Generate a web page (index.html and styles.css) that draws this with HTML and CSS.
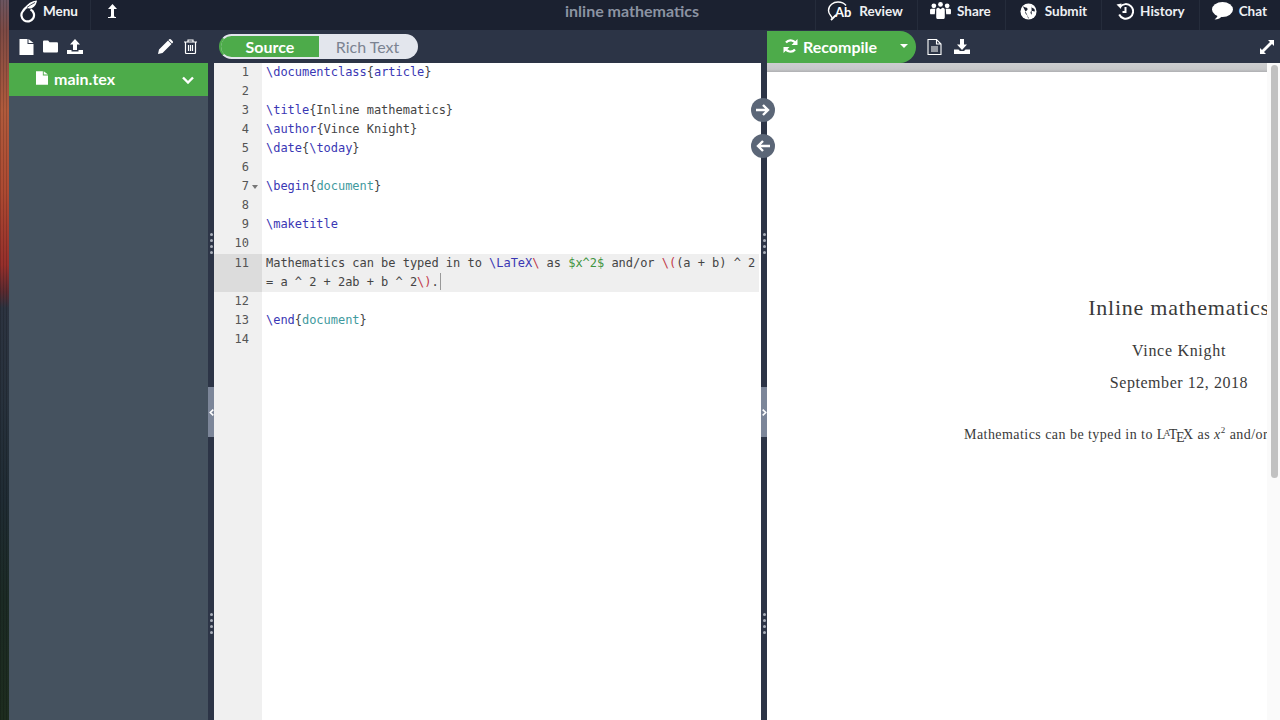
FILE: index.html
```html
<!DOCTYPE html>
<html>
<head>
<meta charset="utf-8">
<title>inline mathematics</title>
<link rel="stylesheet" href="styles.css">
</head>
<body>
<div class="wallpaper"></div>
<div class="app">

  <div class="topbar">
    <div class="top-left">
      <a class="menu">
        <svg class="logo" width="24" height="24" viewBox="0 0 24 24"><path d="M14.500 10.500a6.300 6.300 0 1 1-7.600 1.600C9.500 8 13 5.500 19.500 3" fill="none" stroke="#fff" stroke-width="2.200"/><path d="M9 9.500C11 4.500 16 2 21 1.500c-.5 4-3 7.500-6.500 8-2 .2-3.500-.5-5.500 0z" fill="#fff"/><path d="M11 8.500c2.500-2 5-3.500 8-5" fill="none" stroke="#1b2130" stroke-width=".8"/></svg>
        Menu
      </a>
      <a class="sync">
        <svg width="10" height="14" viewBox="0 0 10 14"><path d="M5.500 0 10 5H7v6c0 1.500.5 2 1.500 2H9v1H1v-1h1.500C3.500 13 4 12.500 4 11V5H1z" fill="#fff"/></svg>
      </a>
    </div>
    <div class="doc-title">inline mathematics</div>
    <div class="top-right">
      <a class="top-item item-review">
        <svg width="28" height="20" viewBox="0 0 28 20"><path d="M5 17c0-2-3.500-3-3.500-7.500C1.500 4 6.500 1 11 1c3.500 0 6.500 1.500 8 3.500" fill="none" stroke="#fff" stroke-width="1.400"/><path d="M4 19l5-5" stroke="#fff" stroke-width="1.800"/><text x="8" y="16" class="ab">Ab</text></svg>
        Review
      </a>
      <a class="top-item">
        <svg width="21" height="19" viewBox="0 0 22 20" fill="#fff"><circle cx="11" cy="2.500" r="2.500"/><circle cx="4" cy="4" r="2.500"/><circle cx="18" cy="4" r="2.500"/><path d="M0 8.500C0 7 1 7 2.500 7h3L5 13H1c-1 0-1-1-1-2zM22 8.500C22 7 21 7 19.500 7h-3l.5 6h4c1 0 1-1 1-2z"/><path d="M6.500 8C6.500 6.500 8 6 9 6l2 1.500L13 6c1 0 2.500.5 2.500 2v8c0 1.500-1 2-2 2h-5c-1 0-2-.5-2-2z"/></svg>
        Share
      </a>
      <a class="top-item item-wide">
        <svg width="17" height="17" viewBox="0 0 18 18"><circle cx="9" cy="9" r="8.500" fill="#fff"/><path d="M3 3.500C5 5 7.500 4.500 8 6c.5 2-2.500 2-2.500 4S8 12 8 14c0 1.500 1 2.500 1.500 2.500M12 2c-.5 2 .5 3 2 3.500s2 2 1.500 3.500c-1 0-2-1-3.500-.5-1.500.6-1 3 .5 4" fill="#1b2130"/></svg>
        Submit
      </a>
      <a class="top-item item-wide item-history">
        <svg width="18" height="18" viewBox="0 0 18 18" fill="none" stroke="#fff" stroke-width="2"><path d="M4 5a7.300 7.300 0 1 1-.8 7.500"/><path d="M9.500 5v5H6.500"/><path d="M0.500 2.500 5.500 1.500 5 7z" fill="#fff" stroke="none"/></svg>
        History
      </a>
      <a class="top-item">
        <svg width="21" height="18" viewBox="0 0 21 18"><ellipse cx="10.500" cy="7.500" rx="10.500" ry="7.500" fill="#fff"/><path d="M6 12c0 2-1.500 4-3.500 5.500C6 17.500 9 16 11 13z" fill="#fff"/></svg>
        Chat
      </a>
    </div>
  </div>

  <div class="toolbar">
    <div class="tools-files">
      <div class="tool-group">
        <svg width="15" height="16" viewBox="0 0 14 16" fill="#fff"><path d="M0 0h8v5h6v11H0zM9 0l5 4H9z"/></svg>
        <svg width="15" height="13" viewBox="0 0 16 13" fill="#fff"><path d="M1.500 0h4L7 2h7.500c1 0 1.500.5 1.500 1.500v8c0 1-.5 1.500-1.500 1.500h-13C.5 13 0 12.500 0 11.500v-10C0 .5.500 0 1.500 0z"/></svg>
        <svg width="16" height="15" viewBox="0 0 16 15" fill="#fff"><path d="M8 0l5 5.500H10V11H6V5.500H3z"/><path d="M0 11h4.500v1.500h7V11H16v4H0z"/></svg>
      </div>
      <div class="tool-group tool-group-right">
        <svg width="15" height="15" viewBox="0 0 15 15" fill="#fff"><path d="M0 15l1-4.500L10 1.500 13.500 5 4.500 14zM11 .5c.7-.7 1.300-.7 2 0l1.500 1.500c.7.700.7 1.300 0 2l-.5.500L10.500 1z"/></svg>
        <svg width="13" height="15" viewBox="0 0 13 15" fill="none" stroke="#fff" stroke-width="1.200"><path d="M1.500 3.500v10c0 .6.400 1 1 1h8c.6 0 1-.4 1-1v-10M0 3h13M4 3V1h5v2M4.500 6v6M6.500 6v6M8.500 6v6"/></svg>
      </div>
    </div>
    <div class="tools-editor">
      <div class="mode-toggle">
        <span class="mode mode-on">Source</span>
        <span class="mode">Rich Text</span>
      </div>
    </div>
    <div class="tools-pdf">
      <div class="recompile">
        <svg width="15" height="14" viewBox="0 0 15 14" fill="none" stroke="#fff" stroke-width="2.200"><path d="M13 5.500A5.800 5.800 0 0 0 3 3.500M2 8.500A5.800 5.800 0 0 0 12 10.500"/><path d="M14.500 0v6h-6zM.5 14V8h6z" fill="#fff" stroke="none"/></svg>
        <span class="recompile-label">Recompile</span>
        <span class="caret"></span>
      </div>
      <svg class="tool-doc" width="15" height="16" viewBox="0 0 15 16" fill="none" stroke="#fff" stroke-width="1.100"><path d="M1 .5h8.500l4.500 4.500v10.500H1zM9.500.5V5H14M4 8h7M4 10h7M4 12h7"/></svg>
      <svg class="tool-dl" width="16" height="15" viewBox="0 0 16 15" fill="#fff"><path d="M6 0h4v5.500h3L8 11 3 5.500h3z"/><path d="M0 10.500h4.500L6 12h4l1.500-1.500H16V15H0z"/></svg>
      <svg class="tool-expand" width="14" height="14" viewBox="0 0 14 14" fill="#fff"><path d="M8 0h6v6l-2-2-8 8 2 2H0V8l2 2 8-8z"/></svg>
    </div>
  </div>

  <div class="panes">
    <div class="file-tree">
      <div class="file-row">
        <svg width="12" height="14" viewBox="0 0 14 16" fill="#fff"><path d="M0 0h8v5h6v11H0zM9 0l5 4H9z"/></svg>
        <span class="file-name">main.tex</span>
        <svg class="file-chevron" width="12" height="8" viewBox="0 0 12 8" fill="none" stroke="#fff" stroke-width="2.400"><path d="M1 1.500l5 5 5-5"/></svg>
      </div>
    </div>

    <div class="resizer">
      <div class="dots dots-top"><i></i><i></i><i></i><i></i></div>
      <div class="toggler"><svg width="5" height="7" viewBox="0 0 5 7" fill="none" stroke="#fff" stroke-width="1.600"><path d="M4.300.7 1.300 3.500l3 2.800"/></svg></div>
      <div class="dots dots-bottom"><i></i><i></i><i></i><i></i></div>
    </div>

    <div class="editor">
      <div class="gutter">
        <div>1</div><div>2</div><div>3</div><div>4</div><div>5</div><div>6</div>
        <div class="fold">7</div>
        <div>8</div><div>9</div><div>10</div>
        <div class="gutter-active">11</div>
        <div>12</div><div>13</div><div>14</div>
      </div>
      <div class="code">
        <div class="ln"><span class="cmd">\documentclass</span>{<span class="cmd">article</span>}</div>
        <div class="ln"></div>
        <div class="ln"><span class="cmd">\title</span>{Inline mathematics}</div>
        <div class="ln"><span class="cmd">\author</span>{Vince Knight}</div>
        <div class="ln"><span class="cmd">\date</span>{<span class="cmd">\today</span>}</div>
        <div class="ln"></div>
        <div class="ln"><span class="cmd">\begin</span>{<span class="env">document</span>}</div>
        <div class="ln"></div>
        <div class="ln"><span class="cmd">\maketitle</span></div>
        <div class="ln"></div>
        <div class="ln-active">
          <div class="ln">Mathematics can be typed in to <span class="cmd">\LaTeX</span><span class="esc">\</span> as <span class="math">$x^2$</span> and/or <span class="esc">\(</span>(a + b) ^ 2</div>
          <div class="ln">= a ^ 2 + 2ab + b ^ 2<span class="esc">\)</span>.<span class="cursor"></span></div>
        </div>
        <div class="ln"></div>
        <div class="ln"><span class="cmd">\end</span>{<span class="env">document</span>}</div>
        <div class="ln"></div>
      </div>
    </div>

    <div class="resizer">
      <a class="sync-btn sync-right"><svg width="14" height="12" viewBox="0 0 14 12" fill="none" stroke="#fff" stroke-width="2.400"><path d="M0 6h11.500M7 1l5 5-5 5"/></svg></a>
      <a class="sync-btn sync-left"><svg width="14" height="12" viewBox="0 0 14 12" fill="none" stroke="#fff" stroke-width="2.400"><path d="M14 6H2.500M7 1 2 6l5 5"/></svg></a>
      <div class="dots dots-top"><i></i><i></i><i></i><i></i></div>
      <div class="toggler"><svg width="5" height="7" viewBox="0 0 5 7" fill="none" stroke="#fff" stroke-width="1.600"><path d="M.7.7l3 2.800-3 2.800"/></svg></div>
      <div class="dots dots-bottom"><i></i><i></i><i></i><i></i></div>
    </div>

    <div class="pdf">
      <div class="pdf-view">
        <div class="pdf-shadow"></div>
        <div class="pdf-page">
          <div class="pdf-title">Inline mathematics</div>
          <div class="pdf-author">Vince Knight</div>
          <div class="pdf-date">September 12, 2018</div>
          <div class="pdf-body">Mathematics can be typed in to <span class="latex">L<span class="la">A</span>T<span class="tex-e">E</span>X</span> as <i>x</i><sup>2</sup> and/or (a + b)</div>
        </div>
      </div>
      <div class="pdf-scroll"><div class="pdf-thumb"></div></div>
    </div>
  </div>

</div>
</body>
</html>
```

FILE: styles.css
```css
* {
  margin: 0;
  padding: 0;
  box-sizing: border-box;
}
html, body {
  width: 100%;
  height: 100%;
  overflow: hidden;
}
body {
  display: flex;
  font-family: "Lato", "Liberation Sans", sans-serif;
  color: #fff;
}
svg {
  display: block;
  flex: none;
}
.wallpaper {
  width: 9px;
  flex: none;
  background:
    repeating-linear-gradient(90deg, rgba(0,0,0,.16) 0 1px, transparent 1px 3px),
    linear-gradient(180deg, #6b5560 0, #7d4a45 30px, #b05a3c 110px, #ad4a32 190px, #962f2b 265px, #5a2a30 292px, #2c3340 308px, #27313c 400px, #1f2b33 500px, #1b2a24 600px, #1d2c1e 720px);
}
.app {
  flex: 1;
  min-width: 0;
  display: flex;
  flex-direction: column;
}

/* top bar */
.topbar {
  height: 30px;
  flex: none;
  display: flex;
  background: #1b2130;
  position: relative;
  font-size: 13.500px;
  font-weight: 700;
}
.top-left {
  display: flex;
  height: 100%;
}
.menu {
  width: 82px;
  display: flex;
  align-items: center;
  gap: 3px;
  padding: 0 0 8px 7px;
  border-right: 1px solid #252c3b;
  color: #f2f3f5;
}
.sync {
  display: flex;
  align-items: center;
  padding: 0 0 8px 16px;
}
.doc-title {
  position: absolute;
  left: 556px;
  top: 0;
  line-height: 21px;
  font-size: 16px;
  color: #8b93a2;
}
.top-right {
  margin-left: auto;
  height: 100%;
  display: flex;
}
.top-item {
  display: flex;
  align-items: center;
  gap: 6px;
  padding: 0 14px 8px 12px;
  border-left: 1px solid #252c3b;
  color: #eef0f3;
}
.top-item:last-child {
  padding-right: 13px;
}
.item-review {
  gap: 4px;
  padding-left: 11px;
}
.item-wide {
  gap: 8px;
  padding-left: 14px;
}
.item-history {
  gap: 6px;
}
.ab {
  font: 700 13px "Lato", sans-serif;
  fill: #fff;
}

/* tool bar */
.toolbar {
  height: 33px;
  flex: none;
  display: flex;
  background: #2c3446;
}
.tools-files {
  width: 205px;
  flex: none;
  display: flex;
  align-items: center;
  justify-content: space-between;
  padding: 0 17px 0 10px;
}
.tool-group {
  display: flex;
  align-items: center;
  gap: 9px;
}
.tool-group-right {
  gap: 11px;
}
.tools-editor {
  width: 553px;
  flex: none;
  padding-left: 5px;
  display: flex;
  align-items: center;
}
.mode-toggle {
  display: flex;
  width: 199px;
  height: 25px;
  border-radius: 13px;
  overflow: hidden;
  background: #e3e6ed;
  border: 2px solid #4dab4a;
  border-right-color: #e3e6ed;
  border-top-color: #e3e6ed;
  border-bottom-color: #e3e6ed;
  font-size: 16px;
}
.mode {
  flex: 1;
  display: flex;
  align-items: center;
  justify-content: center;
  color: #7b8391;
}
.mode-on {
  flex: none;
  width: 98px;
  background: #4dab4a;
  color: #fff;
  font-weight: 700;
}
.tools-pdf {
  flex: 1;
  display: flex;
  align-items: center;
}
.recompile {
  width: 149px;
  height: 32px;
  align-self: flex-start;
  margin-top: 1px;
  display: flex;
  align-items: center;
  padding: 0 0 2px 16px;
  background: #4dab4a;
  border-radius: 0 16px 16px 0;
  font-size: 16px;
  font-weight: 700;
}
.recompile-label {
  margin-left: 5px;
}
.caret {
  margin-left: 23px;
  border-left: 4px solid transparent;
  border-right: 4px solid transparent;
  border-top: 4px solid #fff;
}
.tool-doc {
  margin-left: 11px;
}
.tool-dl {
  margin-left: 12px;
}
.tool-expand {
  margin-left: auto;
  margin-right: 6px;
}

/* panes */
.panes {
  flex: 1;
  min-height: 0;
  display: flex;
}
.file-tree {
  width: 199px;
  flex: none;
  background: #45525f;
}
.file-row {
  height: 33px;
  display: flex;
  align-items: center;
  padding: 0 14px 3px 27px;
  background: #4dab4a;
  font-size: 16px;
  font-weight: 700;
}
.file-name {
  margin-left: 6px;
}
.file-chevron {
  margin-left: auto;
  margin-top: 4px;
}
.resizer {
  width: 6px;
  flex: none;
  background: #2c3446;
  position: relative;
}
.dots {
  position: absolute;
  left: 1.500px;
  display: flex;
  flex-direction: column;
  gap: 3px;
}
.dots i {
  display: block;
  width: 3px;
  height: 3px;
  border-radius: 50%;
  background: #a9afba;
}
.dots-top {
  top: 170px;
}
.dots-bottom {
  top: 550px;
}
.toggler {
  position: absolute;
  left: 0;
  top: 324px;
  width: 100%;
  height: 50px;
  background: #7c8699;
  display: flex;
  align-items: center;
  justify-content: center;
}
.sync-btn {
  position: absolute;
  left: -10px;
  width: 24px;
  height: 24px;
  border-radius: 50%;
  background: #5b6677;
  display: flex;
  align-items: center;
  justify-content: center;
  z-index: 2;
}
.sync-right {
  top: 35px;
}
.sync-left {
  top: 71px;
}

/* editor */
.editor {
  width: 547px;
  flex: none;
  display: flex;
  background: #fff;
  font-family: "DejaVu Sans Mono", "Liberation Mono", monospace;
  font-size: 12px;
  letter-spacing: -.03px;
  line-height: 19.100px;
  color: #444;
}
.gutter {
  width: 48px;
  flex: none;
  margin-top: -.4px;
  background: #f0f0f0;
  color: #555;
  text-align: right;
  padding-right: 13px;
}
.gutter-active {
  height: 38.200px;
  background: #dcdcdc;
  margin-right: -13px;
  padding-right: 13px;
}
.fold {
  position: relative;
}
.fold::after {
  content: "";
  position: absolute;
  right: -9px;
  top: 8px;
  border-left: 3px solid transparent;
  border-right: 3px solid transparent;
  border-top: 4px solid #777;
}
.code {
  flex: 1;
  min-width: 0;
  margin-top: -.4px;
  padding-right: 2px;
}
.ln {
  height: 19.100px;
  padding-left: 4px;
  white-space: pre;
}
.ln-active {
  background: #efefef;
}
.cmd {
  color: #3a37b4;
}
.env {
  color: #3f9a9e;
}
.esc {
  color: #c2394a;
}
.math {
  color: #3f9440;
}
.cursor {
  display: inline-block;
  width: 1px;
  height: 17px;
  margin-left: 1px;
  vertical-align: -4px;
  background: #999;
}

/* pdf */
.pdf {
  flex: 1;
  min-width: 0;
  display: flex;
  background: #fff;
}
.pdf-view {
  flex: 1;
  min-width: 0;
  overflow: hidden;
  position: relative;
}
.pdf-shadow {
  height: 9px;
  background: linear-gradient(180deg, #cdced0, #c6c7c9 70%, #aeafb2);
}
.pdf-page {
  width: 824px;
  display: flex;
  flex-direction: column;
  align-items: center;
  padding-top: 224px;
  font-family: "Liberation Serif", "DejaVu Serif", serif;
  color: #3a3a3a;
  white-space: nowrap;
}
.pdf-title {
  font-size: 22px;
  line-height: 24px;
  letter-spacing: .75px;
}
.pdf-author {
  font-size: 16px;
  line-height: 18px;
  margin-top: 22px;
  letter-spacing: .7px;
}
.pdf-date {
  font-size: 16px;
  line-height: 18px;
  margin-top: 14px;
  letter-spacing: .55px;
}
.pdf-body {
  align-self: flex-start;
  margin-left: 197px;
  margin-top: 33px;
  font-size: 14px;
  line-height: 16px;
  letter-spacing: .45px;
}
.pdf-body sup {
  font-size: 9px;
  line-height: 0;
}
.latex {
  letter-spacing: -1.500px;
  margin-right: 2px;
}
.la {
  font-size: 9px;
  vertical-align: 3px;
}
.tex-e {
  position: relative;
  top: 3px;
}
.pdf-scroll {
  width: 13px;
  flex: none;
  padding: 2px 2px 0 4px;
  background: #fafafa;
}
.pdf-thumb {
  height: 413px;
  border-radius: 4px;
  background: #c1c1c1;
}
```
